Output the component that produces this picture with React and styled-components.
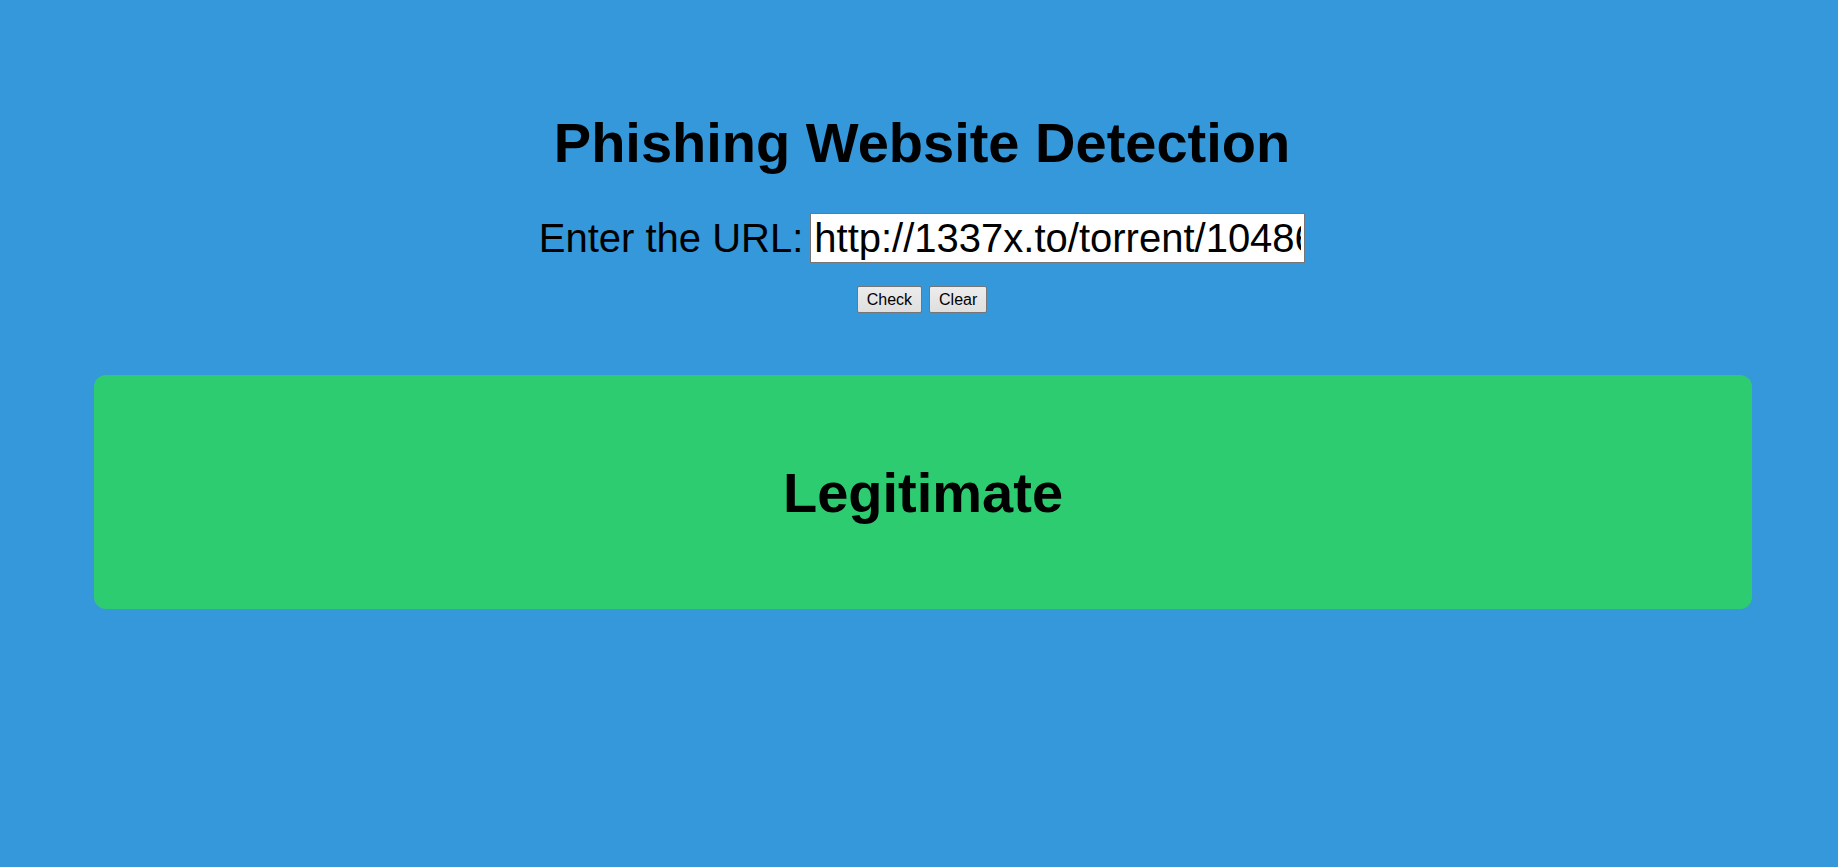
import React, { useState } from 'react';
import styled, { createGlobalStyle } from 'styled-components';

const GlobalStyle = createGlobalStyle`
  html, body {
    margin: 0;
    padding: 0;
    background-color: #3498db;
    font-family: "Liberation Sans", Arial, sans-serif;
    color: #000;
  }
`;

const Page = styled.div`
  min-height: 867px;
  padding: 110px 0 0 6px;
  box-sizing: border-box;
  display: flex;
  flex-direction: column;
  align-items: center;
`;

const Title = styled.h1`
  margin: 0;
  font-size: 56px;
  font-weight: bold;
  line-height: normal;
`;

const UrlForm = styled.div`
  margin-top: 38px;
  display: flex;
  align-items: center;
  gap: 7px;
`;

const Label = styled.label`
  font-size: 40px;
  line-height: normal;
`;

const UrlInput = styled.input`
  box-sizing: border-box;
  width: 495px;
  height: 50px;
  padding: 1px 3px;
  font-family: inherit;
  font-size: 40px;
  color: #000;
  background: #fff;
  border: 1px solid #767676;
  border-radius: 0;
  outline: none;
`;

const ButtonRow = styled.div`
  margin-top: 23px;
  display: flex;
  gap: 7px;
`;

const Button = styled.button`
  height: 27px;
  padding: 0 9px;
  font-family: inherit;
  font-size: 16px;
  color: #000;
  background: linear-gradient(#ececec, #dfdfdf);
  border: 1px solid #767676;
  border-radius: 2px;
  cursor: pointer;
`;

const ResultBox = styled.div`
  align-self: stretch;
  margin: 62px 86px 0 88px;
  height: 234px;
  border-radius: 12px;
  background-color: ${(p) => (p.$phishing ? '#e74c3c' : '#2ecc71')};
  display: flex;
  align-items: center;
  justify-content: center;
`;

const ResultText = styled.h2`
  margin: 0;
  font-size: 56px;
  font-weight: bold;
  line-height: normal;
`;

const App = () => {
  const [url, setUrl] = useState('http://1337x.to/torrent/1048648/American-Sniper-2014-MD-iTALiAN-DVDSCR-X264-BST-MT/');
  const [result, setResult] = useState('Legitimate');

  return (
    <>
      <GlobalStyle />
      <Page>
        <Title>Phishing Website Detection</Title>
        <UrlForm>
          <Label htmlFor="url">Enter the URL:</Label>
          <UrlInput id="url" value={url} onChange={(e) => setUrl(e.target.value)} />
        </UrlForm>
        <ButtonRow>
          <Button onClick={() => setResult('Legitimate')}>Check</Button>
          <Button onClick={() => { setUrl(''); setResult(''); }}>Clear</Button>
        </ButtonRow>
        {result && (
          <ResultBox $phishing={result === 'Phishing'}>
            <ResultText>{result}</ResultText>
          </ResultBox>
        )}
      </Page>
    </>
  );
};

export default App;
